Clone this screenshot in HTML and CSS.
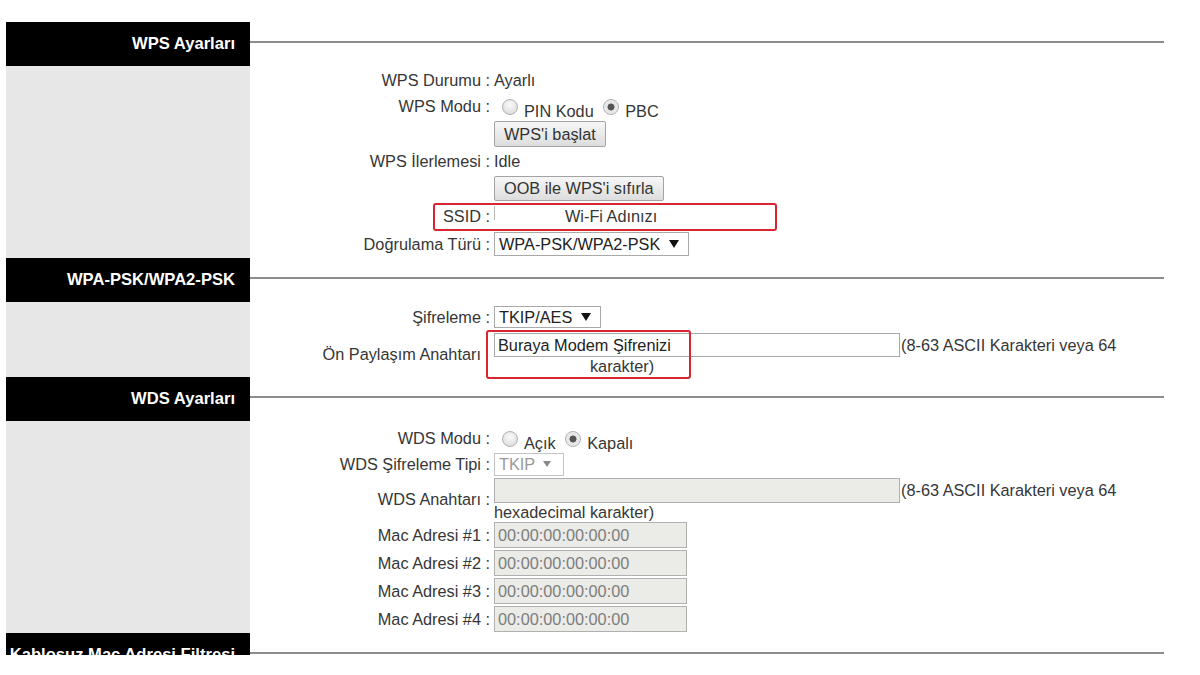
FILE: index.html
```html
<!DOCTYPE html>
<html lang="tr">
<head>
<meta charset="utf-8">
<title>Kablosuz Ayarları</title>
<link rel="stylesheet" href="styles.css">
</head>
<body>
<div class="page">

  <section class="sec">
    <div class="sec-head"><div class="sec-title">WPS Ayarları</div><div class="sec-rule"></div></div>
    <div class="sec-body wps">
      <div class="side"></div>
      <div class="form">
        <div class="row h24"><div class="lbl">WPS Durumu :</div><div class="val">Ayarlı</div></div>
        <div class="row h28 modu"><div class="lbl">WPS Modu :</div><div class="val radios"><span class="radio"></span>PIN Kodu <span class="radio on"></span>PBC</div></div>
        <div class="row h28"><div class="lbl"></div><div class="val"><span class="btn b26">WPS'i başlat</span></div></div>
        <div class="row h26"><div class="lbl">WPS İlerlemesi :</div><div class="val">Idle</div></div>
        <div class="row h28"><div class="lbl"></div><div class="val"><span class="btn b25">OOB ile WPS'i sıfırla</span></div></div>
        <div class="row h28 marked">
          <div class="lbl">SSID :</div>
          <div class="val"><span class="tick"></span><span class="ssid">Wi-Fi Adınızı</span></div>
          <span class="mark mark-ssid"></span>
        </div>
        <div class="row h28"><div class="lbl">Doğrulama Türü :</div><div class="val"><span class="sel s24">WPA-PSK/WPA2-PSK<i class="tri"></i></span></div></div>
      </div>
    </div>
  </section>

  <section class="sec">
    <div class="sec-head"><div class="sec-title">WPA-PSK/WPA2-PSK</div><div class="sec-rule"></div></div>
    <div class="sec-body wpa">
      <div class="side"></div>
      <div class="form">
        <div class="row h26"><div class="lbl">Şifreleme :</div><div class="val"><span class="sel s22">TKIP/AES<i class="tri"></i></span></div></div>
        <div class="row psk marked">
          <div class="lbl">Ön Paylaşım Anahtarı<span class="erased"> :</span></div>
          <div class="val">
            <div class="line1"><span class="inp wide h24">Buraya Modem Şifrenizi</span><span class="note">(8-63 ASCII Karakteri veya 64</span></div>
            <div class="line2"><span class="erased">hexadecimal </span>karakter)</div>
          </div>
          <span class="mark mark-psk"></span>
        </div>
      </div>
    </div>
  </section>

  <section class="sec">
    <div class="sec-head"><div class="sec-title">WDS Ayarları</div><div class="sec-rule"></div></div>
    <div class="sec-body wds">
      <div class="side"></div>
      <div class="form">
        <div class="row h27"><div class="lbl">WDS Modu :</div><div class="val radios"><span class="radio"></span>Açık <span class="radio on"></span>Kapalı</div></div>
        <div class="row h26"><div class="lbl">WDS Şifreleme Tipi :</div><div class="val"><span class="sel s23 dis">TKIP<i class="tri small"></i></span></div></div>
        <div class="row wdskey">
          <div class="lbl">WDS Anahtarı :</div>
          <div class="val">
            <div class="line1"><span class="inp wide h25 dis"></span><span class="note">(8-63 ASCII Karakteri veya 64</span></div>
            <div class="line2">hexadecimal karakter)</div>
          </div>
        </div>
        <div class="row h28"><div class="lbl">Mac Adresi #1 :</div><div class="val"><span class="inp mac dis">00:00:00:00:00:00</span></div></div>
        <div class="row h28"><div class="lbl">Mac Adresi #2 :</div><div class="val"><span class="inp mac dis">00:00:00:00:00:00</span></div></div>
        <div class="row h28"><div class="lbl">Mac Adresi #3 :</div><div class="val"><span class="inp mac dis">00:00:00:00:00:00</span></div></div>
        <div class="row h28"><div class="lbl">Mac Adresi #4 :</div><div class="val"><span class="inp mac dis">00:00:00:00:00:00</span></div></div>
      </div>
    </div>
  </section>

  <section class="sec">
    <div class="sec-head"><div class="sec-title">Kablosuz Mac Adresi Filtresi</div><div class="sec-rule"></div></div>
  </section>

</div>
</body>
</html>
```

FILE: styles.css
```css
html, body {
  margin: 0;
  padding: 0;
  background: #fff;
}
body {
  font-family: "Liberation Sans", Arial, sans-serif;
  font-size: 16.3px;
  color: #363636;
}
.page {
  margin: 22px 0 0 6px;
  width: 1158px;
  height: 633px;
  overflow: hidden;
}
.sec-head {
  display: flex;
  height: 44px;
}
.sec-title {
  width: 244px;
  flex: none;
  box-sizing: border-box;
  background: #000;
  color: #fff;
  font-weight: bold;
  font-size: 16.6px;
  line-height: 43px;
  text-align: right;
  padding-right: 15px;
  white-space: nowrap;
}
.sec-rule {
  flex: 1;
  height: 2px;
  margin-top: 19px;
  background: #8c8c8c;
}
.sec-body {
  display: grid;
  grid-template-columns: 244px 1fr;
}
.side {
  background: #e7e7e7;
}
.sec-body.wps .form { padding-top: 2px; }
.sec-body.wpa .form { padding-top: 2px; }
.sec-body.wds .form { padding-top: 3px; }

.row {
  display: grid;
  grid-template-columns: 240px 1fr;
  column-gap: 4px;
  align-items: center;
  position: relative;
}
.h24 { height: 24px; }
.h26 { height: 26px; }
.h27 { height: 27px; }
.h28 { height: 28px; }
.lbl {
  text-align: right;
  white-space: nowrap;
}
.val {
  white-space: nowrap;
  display: flex;
  align-items: center;
}
.radios {
  display: block;
  padding-top: 7px;
}
.row.modu .lbl {
  margin-top: -1px;
}
.radio {
  display: inline-block;
  box-sizing: border-box;
  width: 16px;
  height: 16px;
  border-radius: 50%;
  border: 1px solid #b0b0b0;
  background: radial-gradient(circle at 50% 35%, #fafafa 0%, #dedede 80%);
  margin: 0 6px 0 8px;
  vertical-align: 2px;
}
.radio.on {
  background: radial-gradient(circle, #555 0 3.2px, #e4e4e4 3.8px, #f2f2f2 100%);
  margin-left: 5px;
}
.btn {
  display: inline-flex;
  align-items: center;
  box-sizing: border-box;
  padding: 0 9px;
  border: 1px solid #a3a3a3;
  border-radius: 2px;
  background: linear-gradient(#f7f7f7, #dddddd);
  color: #333;
}
.b26 { height: 26px; }
.b25 { height: 25px; }

.tick {
  display: inline-block;
  width: 1px;
  height: 14px;
  background: #b8b8b8;
  margin-top: -6px;
}
.ssid {
  margin-left: 70px;
}
.mark {
  position: absolute;
  box-sizing: border-box;
  border: 2px solid #d9252f;
  border-radius: 3px;
  pointer-events: none;
}
.mark-ssid {
  left: 183px;
  top: 1px;
  width: 344px;
  height: 28px;
}
.mark-psk {
  left: 236px;
  top: 0;
  width: 205px;
  height: 49px;
}

.sel {
  display: inline-flex;
  align-items: center;
  box-sizing: border-box;
  border: 1px solid #a9a9a9;
  background: #fff;
  padding: 0 9px 0 4px;
  color: #222;
}
.s24 { height: 24px; }
.s22 { height: 22px; }
.s23 { height: 23px; }
.tri {
  display: inline-block;
  width: 0;
  height: 0;
  margin-left: 9px;
  border-left: 5px solid transparent;
  border-right: 5px solid transparent;
  border-top: 8px solid #111;
}
.tri.small {
  margin-left: 8px;
  border-left-width: 4px;
  border-right-width: 4px;
  border-top: 6px solid #8a8a8a;
}
.sel.dis {
  border-color: #c4c4c4;
  color: #9a9a9a;
  padding-right: 12px;
}

.inp {
  display: inline-flex;
  align-items: center;
  box-sizing: border-box;
  border: 1px solid #a9a9a9;
  background: #fff;
  padding: 0 3px;
  color: #222;
}
.inp.wide { width: 406px; }
.inp.h24 { height: 24px; }
.inp.h25 { height: 25px; }
.inp.mac {
  width: 193px;
  height: 26px;
}
.inp.dis {
  background: #ebebe8;
  border-color: #b0b0b0;
  color: #7d7d7d;
}
.note {
  margin-left: 1px;
}
.row.psk {
  padding: 3px 0 2px;
}
.row.wdskey {
  padding-top: 1px;
}
.val .line1 {
  display: flex;
  align-items: center;
}
.row.psk .val,
.row.wdskey .val {
  display: block;
}
.line2 {
  line-height: 18px;
}
.erased {
  visibility: hidden;
}
```
